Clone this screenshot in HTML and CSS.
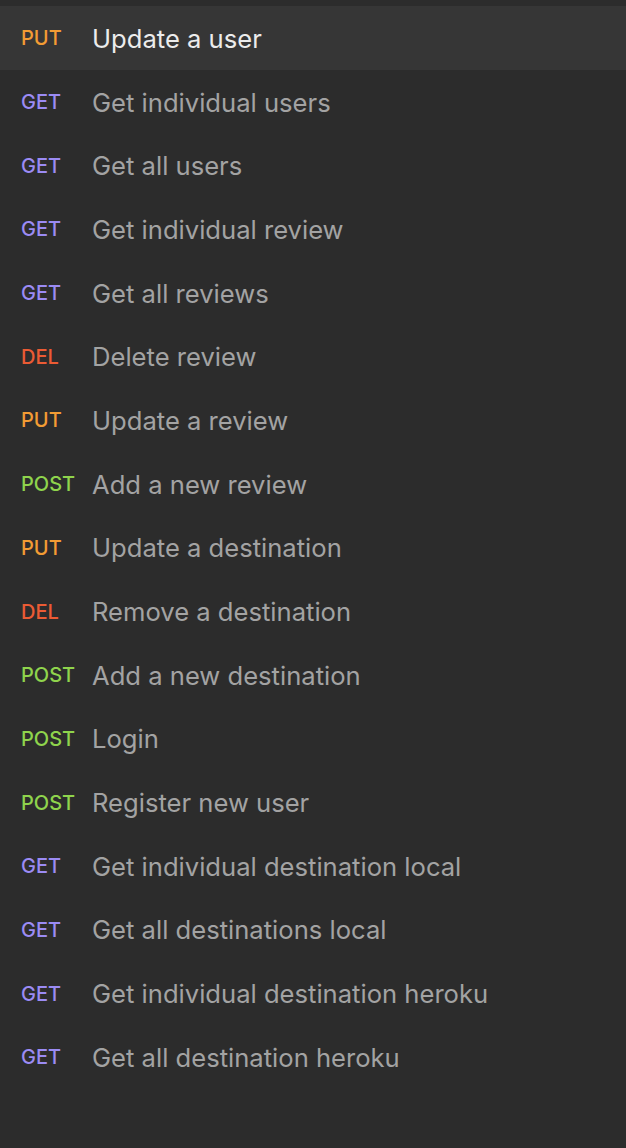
FILE: index.html
```html
<!DOCTYPE html>
<html>
<head>
<meta charset="utf-8">
<link rel="stylesheet" href="styles.css">
</head>
<body>
<div class="list">
  <div class="row active"><span class="method put">PUT</span><span class="name">Update a user</span></div>
  <div class="row"><span class="method get">GET</span><span class="name">Get individual users</span></div>
  <div class="row"><span class="method get">GET</span><span class="name">Get all users</span></div>
  <div class="row"><span class="method get">GET</span><span class="name">Get individual review</span></div>
  <div class="row"><span class="method get">GET</span><span class="name">Get all reviews</span></div>
  <div class="row"><span class="method del">DEL</span><span class="name">Delete review</span></div>
  <div class="row"><span class="method put">PUT</span><span class="name">Update a review</span></div>
  <div class="row"><span class="method post">POST</span><span class="name">Add a new review</span></div>
  <div class="row"><span class="method put">PUT</span><span class="name">Update a destination</span></div>
  <div class="row"><span class="method del">DEL</span><span class="name">Remove a destination</span></div>
  <div class="row"><span class="method post">POST</span><span class="name">Add a new destination</span></div>
  <div class="row"><span class="method post">POST</span><span class="name">Login</span></div>
  <div class="row"><span class="method post">POST</span><span class="name">Register new user</span></div>
  <div class="row"><span class="method get">GET</span><span class="name">Get individual destination local</span></div>
  <div class="row"><span class="method get">GET</span><span class="name">Get all destinations local</span></div>
  <div class="row"><span class="method get">GET</span><span class="name">Get individual destination heroku</span></div>
  <div class="row"><span class="method get">GET</span><span class="name">Get all destination heroku</span></div>
</div>
</body>
</html>
```
FILE: styles.css
```css
html, body {
  margin: 0;
  padding: 0;
  background: #2c2c2c;
}
body {
  font-family: Inter, "Noto Sans", sans-serif;
  height: 1148px;
  overflow: hidden;
}
.list {
  padding-top: 6px;
  display: flex;
  flex-direction: column;
}
.row {
  box-sizing: border-box;
  height: 63.7px;
  display: flex;
  align-items: center;
  padding-left: 21px;
  padding-top: 1px;
}
.row.active {
  background: #363636;
}
.method {
  width: 71px;
  flex: none;
  font-size: 20px;
  font-weight: 500;
}
.name {
  font-size: 25.6px;
  color: #a3a3a3;
}
.active .name {
  color: #ececec;
}
.put { color: #f39c34; }
.get { color: #9b8bf4; }
.del { color: #eb5b34; }
.post { color: #8fd44c; }
```
